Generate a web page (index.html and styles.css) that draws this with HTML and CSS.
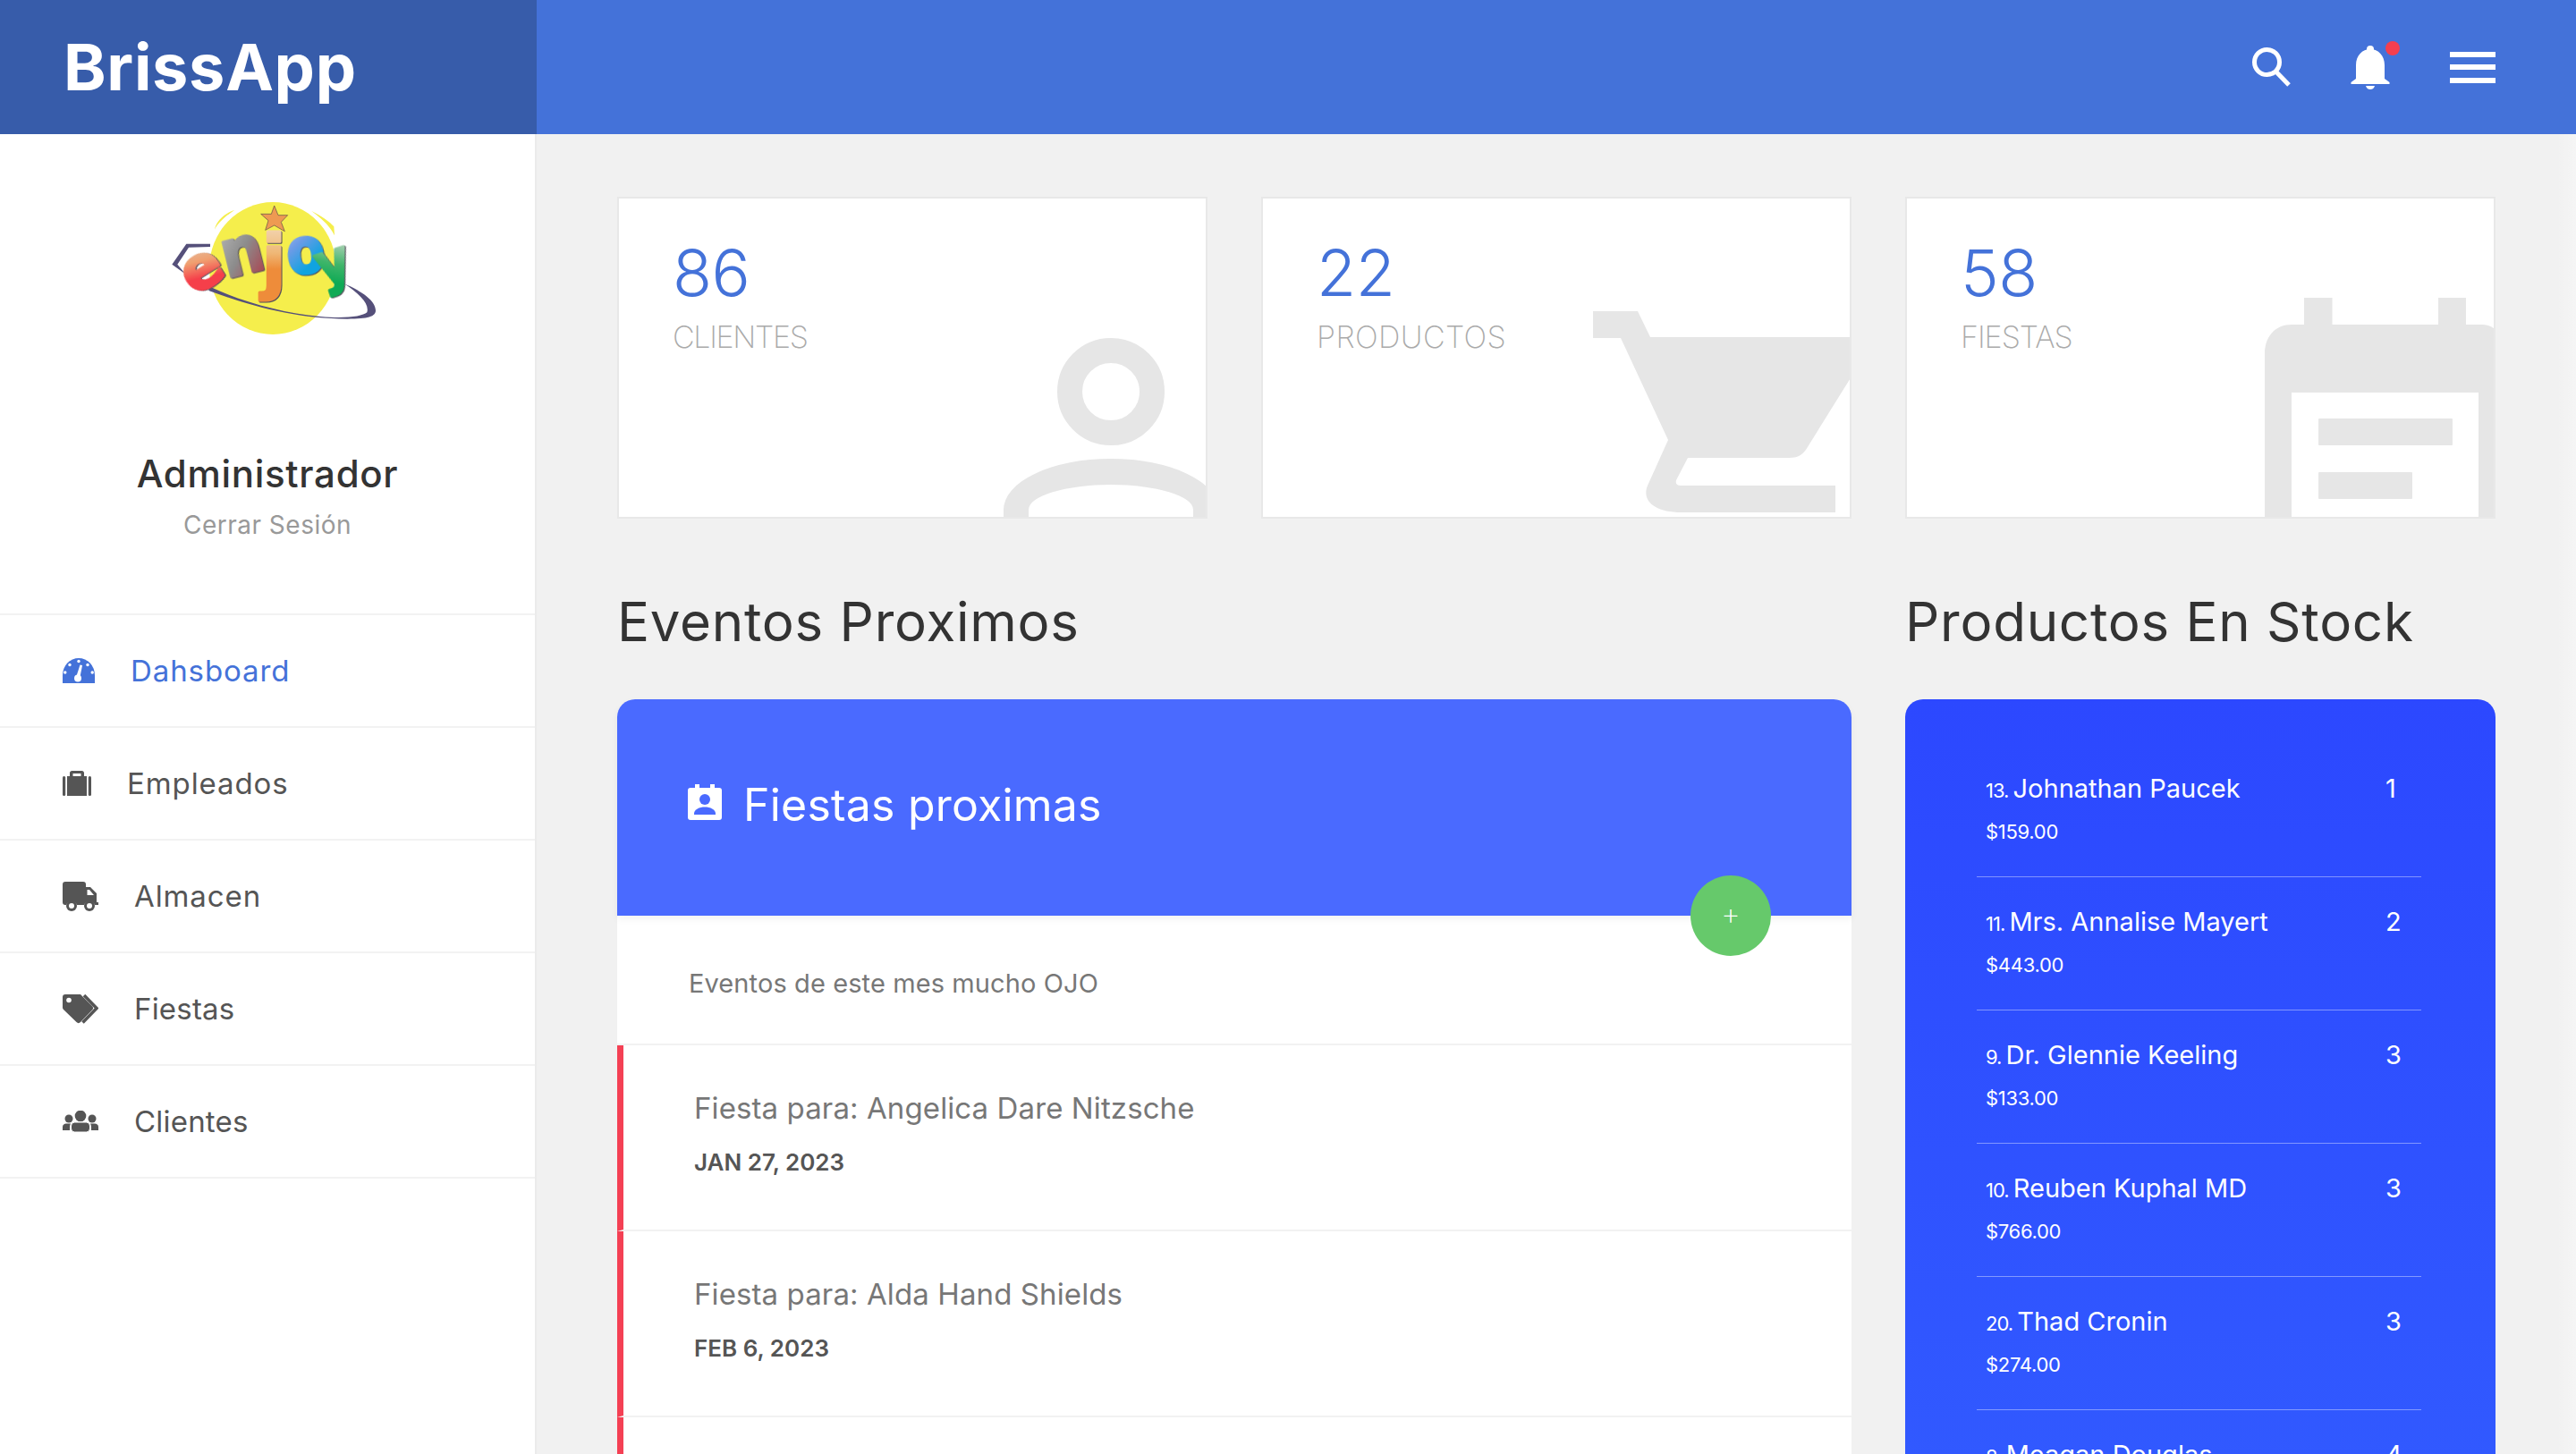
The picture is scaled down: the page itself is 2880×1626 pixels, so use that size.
FILE: index.html
```html
<!DOCTYPE html>
<html lang="es">
<head>
<meta charset="utf-8">
<title>BrissApp</title>
<link rel="stylesheet" href="styles.css">
</head>
<body>
<div class="page">
  <header class="topbar">
    <div class="brand">BrissApp</div>
    <div class="top-actions">
      <svg class="ico-search" width="43" height="44" viewBox="0 0 43 44"><circle cx="16.5" cy="16.5" r="14" fill="none" stroke="#fff" stroke-width="5"/><path d="M26.5 27 L41 42" stroke="#fff" stroke-width="5" fill="none"/></svg>
      <div class="bell">
        <svg width="44" height="50" viewBox="0 0 44 50"><circle cx="22" cy="5" r="4" fill="#fff"/><path d="M6 38V23C6 12 13 5 22 5S38 12 38 23V38L43.5 42V44H.5V42Z" fill="#fff"/><path d="M17 46H27C26 49 24 50 22 50S18 49 17 46Z" fill="#fff"/></svg>
        <span class="bell-dot"></span>
      </div>
      <div class="burger"><span></span><span></span><span></span></div>
    </div>
  </header>
  <div class="layout">
    <aside class="sidebar">
      <svg class="logo" width="270" height="200" viewBox="0 0 800 600">
        <defs>
          <linearGradient id="ge" x1="0.6" y1="0" x2="0.4" y2="1"><stop offset="0" stop-color="#d8d2c6"/><stop offset=".4" stop-color="#f0a070"/><stop offset=".65" stop-color="#f53f4a"/><stop offset="1" stop-color="#f53f4a"/></linearGradient>
          <linearGradient id="gn" x1="0" y1="0" x2="0.6" y2="1"><stop offset="0" stop-color="#c4c4c4"/><stop offset=".6" stop-color="#8c8c8c"/><stop offset="1" stop-color="#a84a55"/></linearGradient>
          <linearGradient id="gj" x1="0" y1="0" x2="0" y2="1"><stop offset="0" stop-color="#f3dcc0"/><stop offset=".4" stop-color="#efb877"/><stop offset=".6" stop-color="#ee8c3a"/><stop offset="1" stop-color="#ee8c3a"/></linearGradient>
          <linearGradient id="go" x1="0" y1="0" x2="0.4" y2="1"><stop offset="0" stop-color="#c4cdf0"/><stop offset=".45" stop-color="#6b9be6"/><stop offset=".8" stop-color="#10a3e0"/></linearGradient>
          <linearGradient id="gy" x1="0.6" y1="0" x2="0.3" y2="1"><stop offset="0" stop-color="#d9dcd4"/><stop offset=".5" stop-color="#3fb56a"/><stop offset=".8" stop-color="#0faa55"/></linearGradient>
        </defs>
        <path d="M205 170C210 140 240 115 272 104C235 130 215 150 205 170ZM530 108C565 125 592 145 605 160L607 190C590 155 560 130 530 108Z" fill="#f5ee4c"/>
        <ellipse cx="400" cy="300" rx="213" ry="222" fill="#f5ee4c"/>
        <path d="M190 218H110L62 287L108 320L80 287L118 230L190 228Z" fill="#55507a"/>
        <path d="M190 362C290 410 430 450 560 462C640 470 700 462 716 448C725 420 690 385 640 352C700 378 745 410 745 442C745 462 720 470 650 470C480 470 320 425 185 375Z" fill="#55507a"/>
        <polygon points="405,90 418,122 450,122 428,145 440,176 405,156 375,172 385,140 360,118 395,118" fill="#ee9a52" stroke="#5a4a4a" stroke-width="2"/>
        <text class="logo-letter" transform="translate(136 393) rotate(-32)" font-size="200" fill="url(#ge)" stroke="url(#ge)">e</text>
        <text class="logo-letter" transform="translate(245 333) rotate(-14) scale(.9 1)" font-size="220" fill="url(#gn)" stroke="url(#gn)">n</text>
        <text class="logo-letter" transform="translate(363 358)" font-size="235" fill="url(#gj)" stroke="url(#gj)">j</text>
        <text class="logo-letter" transform="translate(453 322) rotate(-6) scale(.87 1)" font-size="215" fill="url(#go)" stroke="url(#go)">o</text>
        <text class="logo-letter" transform="translate(567 360) rotate(-18) scale(.9 1)" font-size="190" fill="url(#gy)" stroke="url(#gy)">y</text>
      </svg>
      <div class="user-name">Administrador</div>
      <div class="user-exit">Cerrar Sesión</div>
      <nav class="menu">
        <a class="menu-item is-active">
          <svg width="36" height="28" viewBox="0 0 36 28"><path d="M0 28V19A18 19 0 0 1 36 19V28Z" fill="#4472d9"/><g fill="#fff"><circle cx="2.8" cy="16" r="1.7"/><circle cx="8" cy="7.5" r="1.7"/><circle cx="18" cy="3.5" r="1.7"/><circle cx="28" cy="7.5" r="1.7"/><circle cx="33.2" cy="16" r="1.7"/><circle cx="17" cy="22.5" r="4"/><path d="M19.5 7.5L22 8 19.5 21 15.5 20Z"/></g></svg>
          <span>Dahsboard</span>
        </a>
        <a class="menu-item">
          <svg width="32" height="28" viewBox="0 0 32 28"><g fill="#555"><rect x="0" y="6" width="3.2" height="22" rx="1.5"/><rect x="28.8" y="6" width="3.2" height="22" rx="1.5"/><path d="M5 6H8V2.5C8 1 9 0 10.5 0H21.500C23 0 24 1 24 2.500V6H27V28H5ZM11.500 3V6H20.500V3Z" fill-rule="evenodd"/></g></svg>
          <span>Empleados</span>
        </a>
        <a class="menu-item">
          <svg width="40" height="33" viewBox="0 0 40 33"><g fill="#555"><path d="M3 0H23C25 0 26 1 26 3V6H31L38 13V23H40V26H36A6.500 6.500 0 0 0 24 26H16A6.500 6.500 0 0 0 4 26H3C1 26 0 25 0 23V3C0 1 1 0 3 0ZM27.500 9V15H35L30 9Z" fill-rule="evenodd"/><circle cx="10" cy="27" r="6"/><circle cx="30" cy="27" r="6"/></g><circle cx="10" cy="27" r="3" fill="#fff"/><circle cx="30" cy="27" r="3" fill="#fff"/></svg>
          <span>Almacen</span>
        </a>
        <a class="menu-item menu-item-tight">
          <svg width="40" height="33" viewBox="0 0 40 33"><path d="M3 0H20L33 13C34.500 14.500 34.500 16 33 17.500L20 31C18.500 32.500 17 32.500 15.500 31L1 17C0 16 0 15 0 14V3C0 1 1 0 3 0Z" fill="#555"/><circle cx="7" cy="6.500" r="2.800" fill="#fff"/><path d="M24 1L38 15.500 22.500 31.500" fill="none" stroke="#555" stroke-width="3.500"/></svg>
          <span>Fiestas</span>
        </a>
        <a class="menu-item menu-item-tight">
          <svg width="40" height="24" viewBox="0 0 40 24"><g fill="#555"><circle cx="20" cy="6" r="6.300"/><rect x="9.500" y="13" width="21" height="11" rx="4" stroke="#fff" stroke-width="1"/><circle cx="7" cy="9" r="4.500"/><circle cx="33" cy="9" r="4.500"/><path d="M0 22V18C0 16 2 14.500 4 14.500H9C8 16 8 18 8 22ZM40 22V18C40 16 38 14.500 36 14.500H31C32 16 32 18 32 22Z"/></g></svg>
          <span>Clientes</span>
        </a>
      </nav>
    </aside>
    <main class="content">
      <section class="stats">
        <div class="stat">
          <div class="stat-num">86</div>
          <div class="stat-label stat-label-clientes">CLIENTES</div>
          <svg class="stat-ico" width="656" height="356" viewBox="692 222 656 356"><circle cx="1242" cy="438" r="46" fill="none" stroke="#e6e6e6" stroke-width="28"/><path d="M1122 580V570A120 57 0 0 1 1362 570V580H1334V570A92 28 0 0 0 1150 570V580Z" fill="#e6e6e6"/></svg>
        </div>
        <div class="stat">
          <div class="stat-num">22</div>
          <div class="stat-label stat-label-productos">PRODUCTOS</div>
          <svg class="stat-ico" width="656" height="356" viewBox="1412 222 656 356"><path d="M1781 348H1831L1845 377H2075V413L2019 503C2014 510 2008 512 2000 512H1887L1874 537C1873 541 1875 543 1879 543H2052V573H1880C1850 573 1835 560 1842 543L1865 492L1812 378H1781Z" fill="#e6e6e6"/></svg>
        </div>
        <div class="stat">
          <div class="stat-num">58</div>
          <div class="stat-label stat-label-fiestas">FIESTAS</div>
          <svg class="stat-ico" width="656" height="356" viewBox="2132 222 656 356"><path d="M2576 333H2607.500V363H2726V333H2757V363H2775C2785 363 2795 370 2795 378V580H2771V439H2562V580H2532V395C2532 375 2545 363 2562 363H2576Z" fill="#e6e6e6"/><rect x="2592" y="468" width="150" height="30" rx="1" fill="#e6e6e6"/><rect x="2592" y="528" width="105" height="30" rx="1" fill="#e6e6e6"/></svg>
        </div>
      </section>
      <section class="lower">
        <div class="events">
          <h2 class="section-title">Eventos Proximos</h2>
          <div class="panel">
            <div class="panel-head">
              <svg class="panel-ico" width="38" height="40" viewBox="0 0 38 40"><path d="M3 4H8V0H13V4H25V0H30V4H35C37 4 38 5 38 7V37C38 39 37 40 35 40H3C1 40 0 39 0 37V7C0 5 1 4 3 4Z" fill="#fff"/><circle cx="19" cy="17" r="6" fill="#4a6aff"/><path d="M7 33C7 28 13 25.500 19 25.500S31 28 31 33V34H7Z" fill="#4a6aff"/></svg>
              <span class="panel-title">Fiestas proximas</span>
              <button class="fab" type="button">+</button>
            </div>
            <div class="panel-sub">Eventos de este mes mucho OJO</div>
            <div class="event">
              <div class="event-title">Fiesta para: Angelica Dare Nitzsche</div>
              <div class="event-date">JAN 27, 2023</div>
            </div>
            <div class="event">
              <div class="event-title">Fiesta para: Alda Hand Shields</div>
              <div class="event-date">FEB 6, 2023</div>
            </div>
            <div class="event"></div>
          </div>
        </div>
        <div class="stock">
          <h2 class="section-title">Productos En Stock</h2>
          <div class="stock-panel">
            <div class="stock-item"><div class="stock-row"><span class="stock-name"><small>13.</small> Johnathan Paucek</span><span class="stock-qty">1</span></div><div class="stock-price">$159.00</div></div>
            <div class="stock-item"><div class="stock-row"><span class="stock-name"><small>11.</small> Mrs. Annalise Mayert</span><span class="stock-qty">2</span></div><div class="stock-price">$443.00</div></div>
            <div class="stock-item"><div class="stock-row"><span class="stock-name"><small>9.</small> Dr. Glennie Keeling</span><span class="stock-qty">3</span></div><div class="stock-price">$133.00</div></div>
            <div class="stock-item"><div class="stock-row"><span class="stock-name"><small>10.</small> Reuben Kuphal MD</span><span class="stock-qty">3</span></div><div class="stock-price">$766.00</div></div>
            <div class="stock-item"><div class="stock-row"><span class="stock-name"><small>20.</small> Thad Cronin</span><span class="stock-qty">3</span></div><div class="stock-price">$274.00</div></div>
            <div class="stock-item"><div class="stock-row"><span class="stock-name"><small>8.</small> Meagan Douglas</span><span class="stock-qty">4</span></div><div class="stock-price">$312.00</div></div>
          </div>
        </div>
      </section>
    </main>
  </div>
  <div class="edge-glow"></div>
</div>
</body>
</html>
```
FILE: styles.css
```css
* { box-sizing: border-box; }
html, body { margin: 0; height: 100%; overflow: hidden; }
body { font-family: "Inter", "Noto Sans", sans-serif; background: #f1f1f1; color: #555; }
.page { position: relative; width: 2880px; height: 1626px; overflow: hidden; }

.topbar { display: flex; height: 150px; background: #4472d9; }
.brand { width: 600px; padding-left: 71px; background: #375caa; color: #fff; font-size: 72px; font-weight: 700; line-height: 150px; letter-spacing: .7px; }
.top-actions { flex: 1; display: flex; justify-content: flex-end; align-items: center; gap: 67px; padding-right: 90px; }
.bell { position: relative; display: flex; }
.bell-dot { position: absolute; top: -4px; right: -11px; width: 16px; height: 16px; border-radius: 50%; background: #f43f4f; }
.burger { width: 51px; display: flex; flex-direction: column; gap: 8.5px; }
.burger span { display: block; height: 6px; background: #fff; }

.layout { display: flex; height: 1476px; }
.sidebar { width: 600px; flex: none; background: #fff; border-right: 2px solid #ebebeb; padding-top: 50px; text-align: center; }
.logo { display: block; margin-left: 170px; }
.logo-letter { font-family: "DejaVu Sans", sans-serif; font-weight: 700; stroke-width: 9; stroke-linejoin: round; filter: drop-shadow(3px 3px 0 #55505a); }
.user-name { margin-top: 105px; color: #333; font-size: 42px; line-height: 50px; font-weight: 500; letter-spacing: .7px; }
.user-exit { margin-top: 14px; color: #999; font-size: 28px; line-height: 36px; letter-spacing: .5px; }
.menu { margin-top: 81px; border-top: 2px solid #f2f2f2; }
.menu-item { display: flex; align-items: center; gap: 40px; height: 126px; padding-left: 70px; border-bottom: 2px solid #f2f2f2; color: #555; font-size: 33px; letter-spacing: .9px; }
.menu-item-tight { letter-spacing: .2px; }
.menu-item.is-active { color: #4472d9; }

.content { flex: 1; padding: 70px 90px 0; }
.stats { display: grid; grid-template-columns: repeat(3, 660px); gap: 60px; }
.stat { position: relative; height: 360px; background: #fff; border: 2px solid #e8e8e8; padding: 50px 0 0 60px; overflow: hidden; }
.stat-num { position: relative; color: #4472d9; font-size: 72px; line-height: 66px; font-weight: 300; letter-spacing: -.5px; }
.stat-label { position: relative; margin-top: 17px; color: #aaa; font-size: 34px; line-height: 44px; font-weight: 200; }
.stat-label-clientes { letter-spacing: -1.3px; }
.stat-label-productos { letter-spacing: .4px; }
.stat-label-fiestas { letter-spacing: -1px; }
.stat-ico { position: absolute; left: 0; top: 0; }

.lower { display: grid; grid-template-columns: 1380px 660px; gap: 60px; margin-top: 70px; }
.section-title { margin: 0 0 42px; color: #333; font-size: 60px; line-height: 90px; font-weight: 400; letter-spacing: .75px; }

.panel { background: #fff; border-radius: 20px 20px 0 0; }
.panel-head { position: relative; display: flex; align-items: center; gap: 24px; height: 242px; padding: 0 0 6px 79px; background: #4a6aff; border-radius: 20px 20px 0 0; box-shadow: 0 4px 8px rgba(0,0,0,.05); }
.panel-ico { margin-bottom: 6px; }
.panel-title { color: #fff; font-size: 50px; line-height: 60px; letter-spacing: .2px; }
.fab { position: absolute; right: 90px; top: 197px; width: 90px; height: 90px; border: 0; border-radius: 50%; background: #66c96b; color: #fff; font-family: "Inter", sans-serif; font-size: 34px; font-weight: 200; padding: 0 0 6px; }
.panel-sub { display: flex; align-items: center; height: 145px; padding: 8px 0 0 80px; border-bottom: 2px solid #f2f2f2; color: #777; font-size: 29px; letter-spacing: .1px; }
.event { height: 208px; padding: 49px 0 0 79px; border-left: 7px solid #f44054; border-bottom: 2px solid #f2f2f2; }
.event-title { color: #777; font-size: 33px; line-height: 42px; letter-spacing: .1px; }
.event-date { margin-top: 21px; color: #555; font-size: 26px; line-height: 38px; font-weight: 600; }

.stock-panel { height: 900px; padding: 50px 83px 0 80px; background: linear-gradient(#2c48ff, #3159ff 95%); border-radius: 20px 20px 0 0; }
.stock-item { height: 149px; padding: 30px 8px 0 10px; border-bottom: 1px solid rgba(255,255,255,.4); color: #fff; }
.stock-row { display: flex; justify-content: space-between; font-size: 29px; line-height: 40px; }
.stock-row small { font-size: 22px; letter-spacing: -1px; margin-right: -3px; }
.stock-qty { width: 32px; }
.stock-price { margin-top: 11px; font-size: 22px; line-height: 30px; letter-spacing: -.3px; }

.edge-glow { position: absolute; right: 0; top: 150px; bottom: 0; width: 22px; background: linear-gradient(90deg, rgba(255,255,255,0), rgba(255,255,255,.3)); pointer-events: none; }
```
